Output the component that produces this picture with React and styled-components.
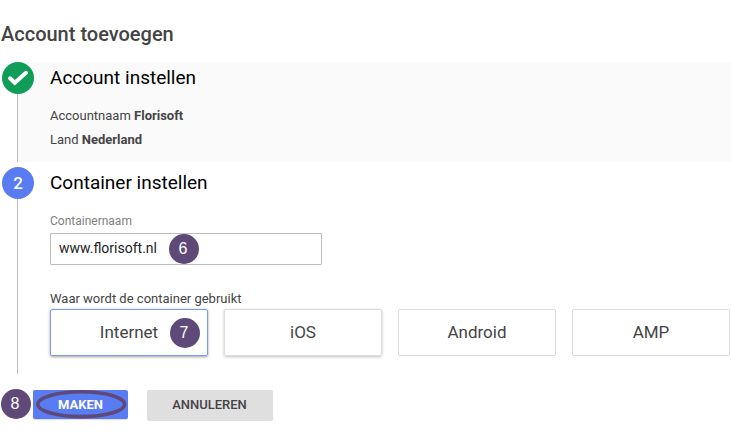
import React from "react";
import styled, { createGlobalStyle } from "styled-components";

const GlobalStyle = createGlobalStyle`
  *, *::before, *::after { box-sizing: border-box; }
  body { margin: 0; background: #fff; font-family: Roboto, sans-serif; color: #444; }
`;

const Page = styled.main`
  width: 731px;
  height: 443px;
  overflow: hidden;
  display: flex;
  flex-direction: column;
  padding-left: 2px;
`;

const PageTitle = styled.h1`
  margin: 22px 0 16px -1px;
  font-size: 20px;
  line-height: 24px;
  font-weight: 500;
`;

const Step = styled.section`
  display: grid;
  grid-template-columns: 32px 1fr;
  height: ${(p) => p.$height}px;
  margin-bottom: ${(p) => p.$gap}px;
  background: ${(p) => (p.$done ? "linear-gradient(#fafafa, #fafafa) 16px 0 no-repeat" : "none")};
`;

const Rail = styled.div`
  display: flex;
  flex-direction: column;
  align-items: center;
`;

const Marker = styled.div`
  flex: none;
  width: 32px;
  height: 32px;
  border-radius: 50%;
  background: ${(p) => p.$color};
  color: #fff;
  font-size: 17px;
  font-weight: 500;
  display: flex;
  align-items: center;
  justify-content: center;
`;

const RailLine = styled.div`
  flex: 1;
  width: 1px;
  margin-right: 1px;
  background: #bdbdbd;
`;

const StepBody = styled.div`
  padding: 4px 0 0 16px;
`;

const StepTitle = styled.h2`
  margin: 0;
  font-size: 19px;
  line-height: 24px;
  font-weight: 400;
  color: #000;
`;

const Summary = styled.div`
  margin-top: 14px;
  font-size: 13px;
  line-height: 24px;
  b { font-weight: 700; }
`;

const FieldLabel = styled.div`
  margin-top: 18px;
  font-size: 12px;
  line-height: 16px;
  color: #808080;
`;

const TextField = styled.div`
  margin-top: 4px;
  width: 272px;
  height: 32px;
  border: 1px solid #bdbdbd;
  border-radius: 1px;
  padding: 0 0 1px 8px;
  display: flex;
  align-items: center;
  gap: 12px;
  font-size: 14px;
  color: #222;
`;

const FieldValue = styled.span`
  padding-bottom: 2px;
`;

const Question = styled.div`
  margin-top: 26px;
  font-size: 13px;
  line-height: 16px;
`;

const Options = styled.div`
  margin-top: 2px;
  display: grid;
  grid-template-columns: repeat(4, 158px);
  gap: 16px;
`;

const Option = styled.div`
  position: relative;
  height: 47px;
  padding-bottom: 1px;
  border: 1px solid ${(p) => (p.$selected ? "#7b9af0" : "#dcdcdc")};
  border-radius: 2px;
  box-shadow: ${(p) =>
    p.$selected ? "0 1px 3px rgba(0,0,0,.38)" : p.$raised ? "0 1px 3px rgba(0,0,0,.25)" : "none"};
  display: flex;
  align-items: center;
  justify-content: center;
  font-size: 17px;
`;

const Badge = styled.span`
  flex: none;
  width: 30px;
  height: 30px;
  padding-right: 2px;
  border-radius: 50%;
  background: #5e4979;
  color: #fff;
  font-family: "Liberation Sans", sans-serif;
  font-size: 16px;
  line-height: 30px;
  text-align: center;
`;

const OptionBadge = styled(Badge)`
  position: absolute;
  left: 119px;
  top: 8px;
`;

const Actions = styled.footer`
  display: flex;
  align-items: flex-start;
  margin-left: -1px;
`;

const Button = styled.button`
  position: relative;
  width: ${(p) => p.$width}px;
  height: ${(p) => (p.$primary ? 29 : 30)}px;
  margin: 1px 0 0 ${(p) => p.$offset}px;
  padding: ${(p) => (p.$primary ? "0" : "0 1px 0 0")};
  border: 0;
  border-radius: 2px;
  background: ${(p) => (p.$primary ? "#5a7cf2" : "#dfdfdf")};
  color: ${(p) => (p.$primary ? "#fff" : "#444")};
  box-shadow: 0 1px 1px rgba(0, 0, 0, 0.15);
  font: ${(p) => (p.$primary ? "700 13px/29px" : "500 13px/28px")} Roboto, sans-serif;
`;

const Ring = styled.svg`
  position: absolute;
  left: 2px;
  top: 0;
`;

export default function App() {
  return (
    <>
      <GlobalStyle />
      <Page>
        <PageTitle>Account toevoegen</PageTitle>
        <Step $done $height={100} $gap={5}>
          <Rail>
            <Marker $color="#0f9d58">
              <svg width="32" height="32" viewBox="0 0 32 32" fill="none">
                <path
                  d="M8 16.3L12.8 20.8L24 10.8"
                  stroke="#fff"
                  strokeWidth="4"
                  strokeLinecap="round"
                />
              </svg>
            </Marker>
            <RailLine />
          </Rail>
          <StepBody>
            <StepTitle>Account instellen</StepTitle>
            <Summary>
              <div>Accountnaam <b>Florisoft</b></div>
              <div>Land <b>Nederland</b></div>
            </Summary>
          </StepBody>
        </Step>
        <Step $height={207} $gap={15}>
          <Rail>
            <Marker $color="#5a7cf2">2</Marker>
            <RailLine />
          </Rail>
          <StepBody>
            <StepTitle>Container instellen</StepTitle>
            <FieldLabel>Containernaam</FieldLabel>
            <TextField>
              <FieldValue>www.florisoft.nl</FieldValue>
              <Badge>6</Badge>
            </TextField>
            <Question>Waar wordt de container gebruikt</Question>
            <Options>
              <Option $selected>
                Internet
                <OptionBadge>7</OptionBadge>
              </Option>
              <Option $raised>iOS</Option>
              <Option>Android</Option>
              <Option>AMP</Option>
            </Options>
          </StepBody>
        </Step>
        <Actions>
          <Badge>8</Badge>
          <Button $primary $width={95} $offset={2}>
            MAKEN
            <Ring width="92" height="29" viewBox="0 0 92 29" fill="none">
              <ellipse cx="46.2" cy="14.2" rx="43.5" ry="12.4" stroke="#5e4979" strokeWidth="3.6" />
            </Ring>
          </Button>
          <Button $width={126} $offset={19}>ANNULEREN</Button>
        </Actions>
      </Page>
    </>
  );
}
